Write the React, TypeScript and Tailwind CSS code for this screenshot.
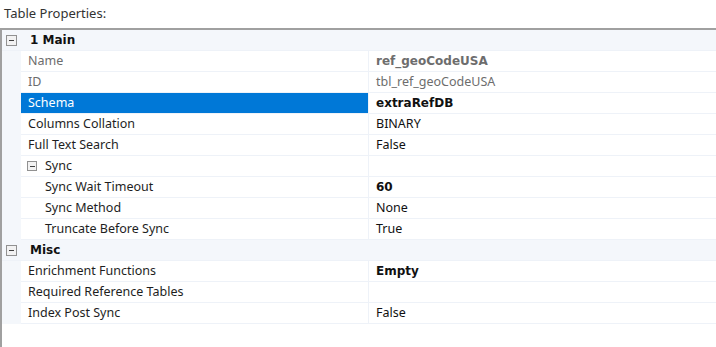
const Expander = ({ big }: { big?: boolean }) => (
  <span className={"inline-flex items-center justify-center border border-[#919191] bg-[#f2f2f2] " + (big ? "w-[11px] h-[11px]" : "w-[10px] h-[10px]")}>
    <span className="block w-[5px] h-px bg-[#404040]" />
  </span>
);

type Row = {
  kind: "cat" | "group" | "prop";
  label: string;
  value?: string;
  bold?: boolean;
  muted?: boolean;
  indent?: boolean;
  selected?: boolean;
};

const rows: Row[] = [
  { kind: "cat", label: "1 Main" },
  { kind: "prop", label: "Name", value: "ref_geoCodeUSA", bold: true, muted: true },
  { kind: "prop", label: "ID", value: "tbl_ref_geoCodeUSA", muted: true },
  { kind: "prop", label: "Schema", value: "extraRefDB", bold: true, selected: true },
  { kind: "prop", label: "Columns Collation", value: "BINARY" },
  { kind: "prop", label: "Full Text Search", value: "False" },
  { kind: "group", label: "Sync", value: "" },
  { kind: "prop", label: "Sync Wait Timeout", value: "60", bold: true, indent: true },
  { kind: "prop", label: "Sync Method", value: "None", indent: true },
  { kind: "prop", label: "Truncate Before Sync", value: "True", indent: true },
  { kind: "cat", label: "Misc" },
  { kind: "prop", label: "Enrichment Functions", value: "Empty", bold: true },
  { kind: "prop", label: "Required Reference Tables", value: "" },
  { kind: "prop", label: "Index Post Sync", value: "False" },
];

// bold cells in the reference look like a Verdana/Tahoma bold
const boldFont = { fontFamily: '"DejaVu Sans", "Liberation Sans", sans-serif' };

const App = () => {
  return (
    <div className="w-[716px] h-[347px] bg-white overflow-hidden text-[12.5px] text-[#1e1e1e]" style={{ fontFamily: '"Segoe UI", "Noto Sans", "Liberation Sans", sans-serif' }}>
      <div className="h-[28px] px-[4px] pt-[4px] text-[13px] text-[#333]">Table Properties:</div>
      <div className="h-[2px] bg-[#a0a0a0]" />
      <div className="flex h-[317px]">
        <div className="w-[2px] bg-[#a0a0a0]" />
        <div className="flex-1">
          {rows.map((r, i) =>
            r.kind === "cat" ? (
              <div key={i} className="flex items-center h-[21px] bg-[#f4f7fb] border-b border-[#eef2f8]">
                <div className="pl-[4px] flex">
                  <Expander big />
                </div>
                <span className="pl-[13px] font-bold text-[12px] text-[#111]" style={boldFont}>{r.label}</span>
              </div>
            ) : (
              <div key={i} className="flex h-[21px]">
                <div className="w-[19px] bg-[#f4f7fb]" />
                <div
                  className={
                    "w-[348px] flex items-center border-b border-r border-[#eef2f8] " +
                    (r.selected ? "bg-[#0078d7] text-white" : r.muted ? "text-[#6d6d6d]" : "")
                  }
                >
                  {r.kind === "group" ? (
                    <span className="flex items-center pl-[6px]">
                      <Expander />
                      <span className="pl-[8px]">{r.label}</span>
                    </span>
                  ) : (
                    <span className={r.indent ? "pl-[24px]" : "pl-[7px]"}>{r.label}</span>
                  )}
                </div>
                <div
                  className={
                    "flex-1 flex items-center pl-[7px] border-b border-[#eef2f8] " +
                    (r.muted ? "text-[#6d6d6d] " : "text-[#111] ") +
                    (r.bold ? "font-bold text-[12px]" : "")
                  }
                  style={r.bold ? boldFont : undefined}
                >
                  {r.value}
                </div>
              </div>
            )
          )}
        </div>
      </div>
    </div>
  );
};

export default App;
